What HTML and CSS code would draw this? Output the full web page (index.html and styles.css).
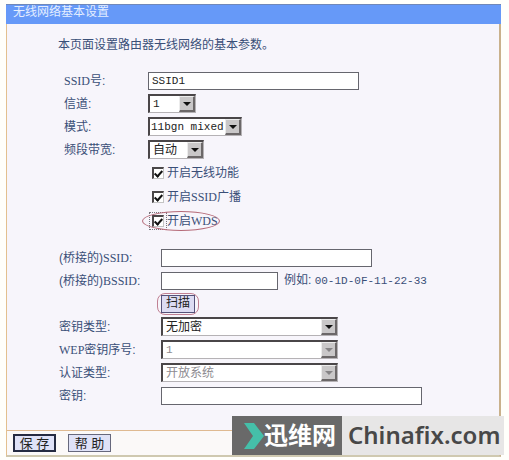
FILE: index.html
```
<!DOCTYPE html>
<html lang="zh-CN">
  <head>
    <meta charset="UTF-8" />
    <meta name="viewport" content="width=device-width, initial-scale=1.0" />
    <title>无线网络基本设置</title>
    <link rel="stylesheet" href="styles.css">
  </head>
  <body>
    <form class="panel">
      <h1 class="title">无线网络基本设置</h1>
      <div class="content">
        <p class="intro">本页面设置路由器无线网络的基本参数。</p>

        <div class="group basic">
          <div class="row">
            <label for="ssid"><span class="en">SSID</span>号:</label>
            <input type="text" id="ssid" class="text medium" value="SSID1" />
          </div>
          <div class="row">
            <label for="channel">信道:</label>
            <span class="select channel">
              <select id="channel" class="mono"><option>1</option></select>
            </span>
          </div>
          <div class="row">
            <label for="mode">模式:</label>
            <span class="select mode">
              <select id="mode" class="mono"><option>11bgn mixed</option></select>
            </span>
          </div>
          <div class="row">
            <label for="band">频段带宽:</label>
            <span class="select band">
              <select id="band"><option>自动</option></select>
            </span>
          </div>
          <div class="check">
            <input type="checkbox" id="wireless" checked />
            <label for="wireless">开启无线功能</label>
          </div>
          <div class="check">
            <input type="checkbox" id="broadcast" checked />
            <label for="broadcast">开启<span class="en">SSID</span>广播</label>
          </div>
          <div class="check marked">
            <input type="checkbox" id="wds" checked />
            <label for="wds">开启<span class="en">WDS</span></label>
          </div>
        </div>

        <div class="group bridge">
          <div class="row">
            <label for="bssidName">(桥接的)<span class="en">SSID</span>:</label>
            <input type="text" id="bssidName" class="text medium" />
          </div>
          <div class="row">
            <label for="bssid">(桥接的)<span class="en">BSSID</span>:</label>
            <input type="text" id="bssid" class="text short" />
            <span class="hint">例如: <span class="mono">00-1D-0F-11-22-33</span></span>
          </div>
          <div class="row scan-row">
            <button type="button" class="scan">扫描</button>
          </div>
          <div class="row">
            <label for="keyType">密钥类型:</label>
            <span class="select wide">
              <select id="keyType"><option>无加密</option></select>
            </span>
          </div>
          <div class="row">
            <label for="wepIndex"><span class="en">WEP</span>密钥序号:</label>
            <span class="select wide off">
              <select id="wepIndex" class="mono" disabled><option>1</option></select>
            </span>
          </div>
          <div class="row">
            <label for="auth">认证类型:</label>
            <span class="select wide off">
              <select id="auth" disabled><option>开放系统</option></select>
            </span>
          </div>
          <div class="row">
            <label for="key">密钥:</label>
            <input type="text" id="key" class="text long" />
          </div>
        </div>
      </div>
      <div class="footer">
        <button type="submit" class="btn save">保 存</button>
        <button type="button" class="btn">帮 助</button>
      </div>
    </form>

    <div class="watermark">
      <div class="mark-name">
        <svg width="20" height="26" viewBox="0 0 20 26" aria-hidden="true">
          <path d="M0 0h10l10 13-10 13H0l9-13z" fill="#45bfa9" />
        </svg>
        <span>迅维网</span>
      </div>
      <div class="mark-site">Chinafix.com</div>
    </div>
  </body>
</html>
```

FILE: styles.css
```
*,
*::before,
*::after {
  box-sizing: border-box;
}
body {
  position: relative;
  margin: 0;
  padding: 4px 8px 4px 6px;
  background-color: #fffffb;
  color: #3a4f78;
  font-family: "Liberation Sans", "Noto Sans CJK SC", sans-serif;
  font-size: 12px;
  line-height: 18px;
}
input,
select,
button {
  margin: 0;
  font-family: inherit;
  font-size: 12px;
  color: #222;
}
.mono,
.text {
  font-family: "Liberation Mono", monospace;
  font-size: 11px;
}
.en {
  font-family: "Liberation Serif", serif;
  line-height: 1;
}

/* panel */
.panel {
  border: 1px solid #e3c08f;
  border-right: 2px solid #c9b18c;
  border-bottom: 2px solid #cfc9b0;
  border-top: 0;
  background-color: #f7f5fb;
}
.title {
  height: 20px;
  margin: 0 -2px 0 -1px;
  padding-left: 7px;
  border-top: 1px solid #7088b8;
  background-color: #6699f8;
  color: #e4eeff;
  font-size: 12px;
  font-weight: normal;
  line-height: 15px;
}
.content {
  padding: 12px 16px 23px 51px;
}
.intro {
  margin: 0 0 15px;
}

/* rows */
.row {
  display: flex;
  align-items: center;
  height: 23px;
}
.basic {
  padding-left: 6px;
}
.basic .row label {
  width: 84px;
}
.bridge {
  margin-top: 13px;
  padding-left: 1px;
}
.bridge .row label {
  width: 102px;
}
.scan-row {
  padding-left: 102px;
}
.hint {
  margin-left: 6px;
}

/* controls */
.text {
  height: 18px;
  padding: 0 3px;
  border: 1px solid #66666e;
  background-color: #fff;
}
.medium {
  width: 211px;
}
.short {
  width: 117px;
}
.long {
  width: 261px;
}
.select {
  position: relative;
  height: 19px;
  border: 1px solid #b5b2b5;
  border-top: 2px solid #4a4648;
  border-left: 2px solid #4a4648;
  background-color: #fff;
}
.select select {
  display: block;
  width: 100%;
  height: 16px;
  padding: 0 0 0 3px;
  border: 0;
  appearance: none;
  background: none;
  line-height: 16px;
  opacity: 1;
}
.select::before {
  content: "";
  position: absolute;
  top: 0;
  right: 0;
  width: 16px;
  height: 16px;
  border: 1px solid #ececec;
  border-right: 2px solid #6b6768;
  border-bottom: 2px solid #6b6768;
  background-color: #c9c7c8;
  pointer-events: none;
}
.select::after {
  content: "";
  position: absolute;
  top: 6px;
  right: 4px;
  border: 4px solid transparent;
  border-top-color: #111;
  border-bottom: 0;
  pointer-events: none;
}
.off select {
  color: #8d8b90;
}
.off::after {
  border-top-color: #858385;
}
.channel {
  width: 48px;
}
.mode {
  width: 94px;
}
.mode select {
  padding-left: 1px;
}
.band {
  width: 56px;
}
.wide {
  width: 177px;
}

/* checkboxes */
.check {
  display: flex;
  align-items: center;
  gap: 3px;
  height: 24px;
  padding-left: 88px;
}
.check input {
  display: grid;
  width: 12px;
  height: 12px;
  border: 1px solid #c4c4c4;
  border-top: 2px solid #4a4648;
  border-left: 2px solid #4a4648;
  appearance: none;
  background-color: #fff;
}
.check input:checked::before {
  content: "";
  align-self: start;
  justify-self: center;
  width: 5px;
  height: 8px;
  border: solid #111;
  border-width: 0 2px 2px 0;
  transform: rotate(42deg);
}
.marked {
  position: relative;
}
.marked input {
  outline: 1px dotted #77747c;
  outline-offset: 2px;
}
.marked::after {
  content: "";
  position: absolute;
  top: 2px;
  left: 78px;
  width: 78px;
  height: 20px;
  border: 1px solid #b56a78;
  border-radius: 50%;
  pointer-events: none;
}

/* buttons */
.scan {
  position: relative;
  height: 18px;
  padding: 0 4px;
  border: 1px solid #55527a;
  background-color: #dddcf3;
  line-height: 15px;
}
.scan::after {
  content: "";
  position: absolute;
  inset: -3px -5px;
  border: 1px solid #c08093;
  border-radius: 8px;
}
.footer {
  display: flex;
  gap: 12px;
  padding: 3px 6px;
  border-top: 1px solid #dfba91;
  background-color: #fbf9f8;
}
.btn {
  width: 43px;
  height: 18px;
  padding: 0;
  border: 1px solid #66687c;
  background-color: #dfe2f7;
  font-size: 13px;
  line-height: 15px;
}
.save {
  border: 2px solid #252b42;
  line-height: 13px;
}

/* watermark */
.watermark {
  position: absolute;
  right: 5px;
  bottom: 6px;
  display: flex;
  height: 39px;
  line-height: 38px;
}
.mark-name {
  display: flex;
  align-items: center;
  width: 110px;
  padding-left: 12px;
  background-color: #696969;
  color: #fff;
  font-size: 24px;
  font-weight: bold;
}
.mark-site {
  width: 162px;
  padding-left: 6px;
  background-color: #e7e6e6;
  color: #484848;
  font-family: "Noto Sans", sans-serif;
  font-size: 24px;
  font-weight: 600;
}
```
